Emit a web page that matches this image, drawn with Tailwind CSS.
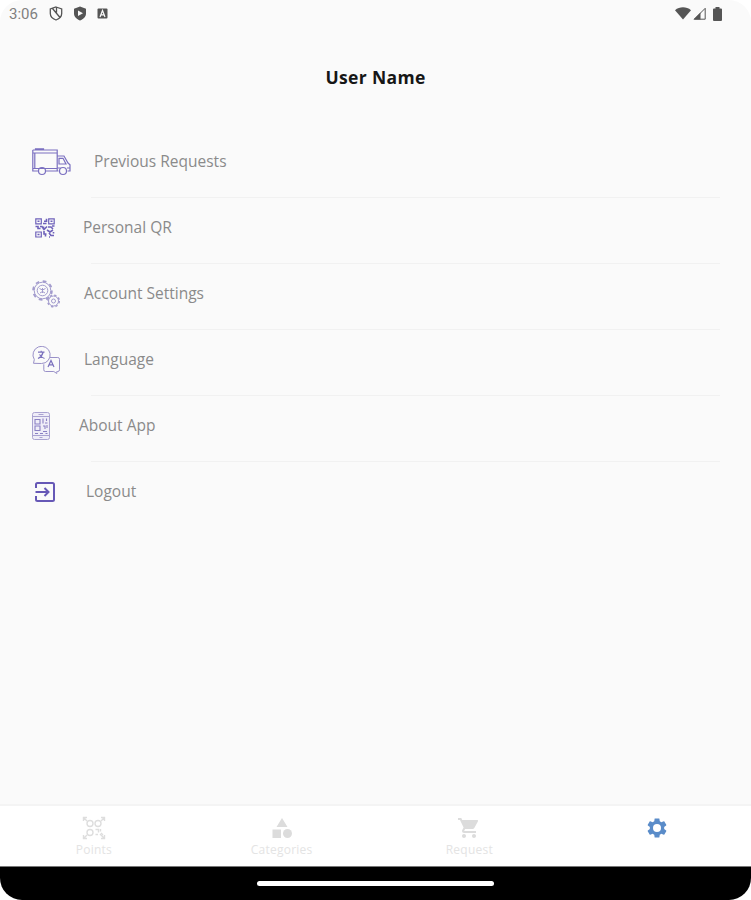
<!DOCTYPE html>
<html lang="en">
<head>
  <meta charset="UTF-8">
  <meta name="viewport" content="width=device-width, initial-scale=1.0">
  <title>User Settings</title>
  <script src="https://cdn.jsdelivr.net/npm/@tailwindcss/browser@4"></script>
</head>
<body class="bg-white font-['Open_Sans','Noto_Sans',sans-serif]">
  <div class="w-[751px] h-[900px] flex flex-col overflow-hidden rounded-[22px] bg-[#fafafa]">

    <!-- Status bar -->
    <header class="h-[27px] shrink-0 flex items-center justify-between pl-[9px] pr-[29px] text-[#555]">
      <div class="flex items-center">
        <span class="w-[40px] text-[15px] leading-7 text-[#808080] font-['Roboto',sans-serif]">3:06</span>
        <svg class="w-[14px] h-[15px] mr-[10px]" viewBox="0 0 14 15" fill="none" stroke="currentColor" stroke-width="1.3">
          <path d="M7 1 12.700 3v4.500c0 3-2.500 5.300-5.700 6.500C3.800 12.800 1.300 10.500 1.300 7.500V3zM3.500 2.500l7.500 9M7.500 1.500v5"/>
        </svg>
        <svg class="w-[14px] h-[15px] mr-[10px]" viewBox="0 0 14 15">
          <path fill="currentColor" d="M7 .5 13 2.700v4.800c0 3.200-2.600 5.700-6 7-3.400-1.300-6-3.800-6-7V2.700z"/>
          <path fill="#fafafa" d="M5 4.500v5.600l5-2.800z"/>
        </svg>
        <svg class="w-[11px] h-[11px]" viewBox="0 0 11 11">
          <rect x=".5" y=".5" width="10" height="10" rx="1" fill="currentColor"/>
          <path d="M3 9 5.500 2.500 8 9M3.800 6.800h3.400" fill="none" stroke="#fafafa" stroke-width="1.200"/>
        </svg>
      </div>
      <div class="flex items-center">
        <svg class="w-4 h-[13px] mr-[2px]" viewBox="0 0 16 13"><path fill="currentColor" d="M0 3.200C4.600-.6 11.400-.6 16 3.200L8 12.500z"/></svg>
        <svg class="w-[13px] h-[13px] mr-[7px]" viewBox="0 0 13 13">
          <path fill="none" stroke="currentColor" d="M12.200 1.300v10.900H1.300z"/>
          <path fill="currentColor" d="M7.500 5.500V12.500H.5z"/>
        </svg>
        <svg class="w-[9px] h-[14px]" viewBox="0 0 9 14"><path fill="currentColor" d="M2.500 0h4v1.500H8q1 0 1 1V13q0 1-1 1H1q-1 0-1-1V2.500q0-1 1-1h1.500z"/></svg>
      </div>
    </header>

    <h1 class="h-[105px] shrink-0 pt-[38px] text-center text-[17.5px] leading-6 tracking-[0.35px] font-bold text-[#161616]">User Name</h1>

    <!-- Menu -->
    <main class="grow">
      <ul class="pl-8 pr-[31px] text-[15.5px] text-[#8a8a8a]">
        <li class="h-[66px]">
          <a href="#" class="flex items-center h-[59px]">
            <svg class="w-[39px] h-[28px] mr-[23px]" viewBox="0 0 39 28" fill="none" stroke="#7a6fc0" stroke-width="1.200">
              <path d="M3.500 2V.8h8V2M.8 2h24.400v21H14M6.500 23H.8V2M.8 5h24.400M2.800 5v16M.8 20.500h24.400M14 23h12.500M25.200 8h6.800l4 7 2 1.800v6.200h-2.500M27 10.300h4l3 5.700h-7zM25.500 20h3M35 20h3"/>
              <circle cx="10" cy="23" r="3.500"/>
              <circle cx="31" cy="23" r="3.500"/>
            </svg>
            <span>Previous Requests</span>
          </a>
          <div class="ml-[59px] mt-[6px] h-px bg-[#f1f1f1]"></div>
        </li>
        <li class="h-[66px]">
          <a href="#" class="flex items-center h-[59px]">
            <svg class="w-5 h-5 ml-[3px] mr-7" viewBox="0 0 20 20" fill="none" stroke="#6f62ba" stroke-width="1.200">
              <path d="M.8.800h5.500v5H.8zM13.700.800h5.500v5h-5.500zM.8 14h5.500v5H.8z"/>
              <path d="M2.500 3.300h2M15.500 3.300h2M2.500 16.500h2M11.500.8v2.500H9M8 5.500h3.500M.5 8.500h2.500v2h2.500M5 8.500h2l2 3 3-3M8.500 8.500v3M13 9h3l2 2M17 8h2.500M9 13v3h2.500M10.500 18.500v-2M12 12l3 2 3-2M14 15l2 2.500h3M18.500 14v1.500M14 19h1" stroke-width="1.600"/>
            </svg>
            <span>Personal QR</span>
          </a>
          <div class="ml-[59px] mt-[6px] h-px bg-[#f1f1f1]"></div>
        </li>
        <li class="h-[66px]">
          <a href="#" class="flex items-center h-[59px]">
            <svg class="w-7 h-7 mr-6" viewBox="0 0 28 28" fill="none" stroke="#a29bcd">
              <circle cx="10.500" cy="10.500" r="8.300"/>
              <circle cx="10.500" cy="10.500" r="9.400" stroke-width="1.800" stroke-dasharray="3.700 3.680"/>
              <circle cx="10.500" cy="10.500" r="5.300"/>
              <path d="M7.500 8.500q3 3 6 0M8 13q2.500-3 5 0M10.500 8v5"/>
              <circle cx="21.500" cy="21" r="5" fill="#fafafa"/>
              <circle cx="21.500" cy="21" r="5.800" stroke-width="1.500" stroke-dasharray="2.300 2.255"/>
              <circle cx="21.500" cy="21" r="2"/>
            </svg>
            <span>Account Settings</span>
          </a>
          <div class="ml-[59px] mt-[6px] h-px bg-[#f1f1f1]"></div>
        </li>
        <li class="h-[66px]">
          <a href="#" class="flex items-center h-[59px]">
            <svg class="w-7 h-7 mr-6" viewBox="0 0 28 28" fill="none" stroke="#9990c8">
              <path d="M2.300 13.500A8.600 8.600 0 1 1 9.500 17.500L1.500 17.300z"/>
              <path d="M17.800 11.500h8q1.700 0 1.700 1.700v10.600q0 1.700-1.700 1.700h-1v2l-3-2h-8.300q-1.700 0-1.700-1.700v-5.500"/>
              <path d="M6 6.200h6.500M9.200 4.800v1.400M11 6.500Q10 10.500 6 12.500M7.500 8.500q2 3 5 4M16 21l3-6.500 3 6.500M17.200 18.800h3.600" stroke="#7b71bd" stroke-width="1.200"/>
            </svg>
            <span>Language</span>
          </a>
          <div class="ml-[59px] mt-[6px] h-px bg-[#f1f1f1]"></div>
        </li>
        <li class="h-[66px]">
          <a href="#" class="flex items-center h-[60px]">
            <svg class="w-[18px] h-7 mr-[29px]" viewBox="0 0 18 28" fill="none" stroke="#aaa3d1">
              <rect x=".5" y=".5" width="17" height="27" rx="2" fill="#efedf8"/>
              <path d="M1 4.500h16M1 23.500h16M6.500 2.500h5M7.500 25.500h3"/>
              <path d="M3 7.500h5V12H3zM3 14h5v4.500H3zM11 6.500v5M14.500 6.500v2.500M13 11h2.500M11 14h2v3M15 13v3M11 19.500h4M3 21.500h3M8 21.500h3M13.500 21.500h2" stroke="#8a80c3" stroke-width="1.100"/>
            </svg>
            <span>About App</span>
          </a>
          <div class="ml-[59px] mt-[5px] h-px bg-[#f1f1f1]"></div>
        </li>
        <li class="h-[66px]">
          <a href="#" class="flex items-center h-[59px]">
            <svg class="w-5 h-5 ml-[3px] mr-[31px]" viewBox="0 0 20 20" fill="none" stroke="#6658b6" stroke-width="2">
              <path d="M1 6V2.500Q1 1 2.500 1h15Q19 1 19 2.500v15q0 1.500-1.500 1.500h-15Q1 19 1 17.500V14M.5 10h12.500M9.500 6 13.500 10l-4 4"/>
            </svg>
            <span>Logout</span>
          </a>
        </li>
      </ul>
    </main>

    <!-- Bottom navigation -->
    <nav class="h-[62px] shrink-0 grid grid-cols-4 bg-white border-t-2 border-[#f4f4f4] text-[12px] leading-4 tracking-[0.25px] text-[#e4e4e4]">
      <a href="#" class="flex flex-col items-center pt-[10px]">
        <svg class="w-6 h-6 mb-[2px]" viewBox="0 0 24 24" fill="none" stroke="#dedede" stroke-width="1.400">
          <path d="M1.500 5V1.500H5M19 1.500h3.500V5M1.500 19v3.500H5M19 22.500h3.500V19M2 2l3 3M22 2l-3 3M2 22l3-3M22 22l-4-4"/>
          <circle cx="8" cy="7.500" r="3"/>
          <circle cx="16" cy="7.500" r="3"/>
          <circle cx="8" cy="16.500" r="3"/>
          <path d="M13.500 13.500h3v3M18.500 13v2.500M13.500 18.500h2.500M19 17l2 2"/>
        </svg>
        <span>Points</span>
      </a>
      <a href="#" class="flex flex-col items-center pt-[10px]">
        <svg class="w-6 h-6 mb-[2px]" viewBox="0 0 24 24" fill="#dcdcdc">
          <path d="M12 2 6.500 11h11zM2.500 13.500h8.500v8.500H2.500z"/><circle cx="17.500" cy="17.500" r="4.500"/>
        </svg>
        <span>Categories</span>
      </a>
      <a href="#" class="flex flex-col items-center pt-[10px]">
        <svg class="w-6 h-6 mb-[2px]" viewBox="0 0 24 24" fill="#dcdcdc">
          <path d="M7 18c-1.100 0-1.990.9-1.990 2S5.900 22 7 22s2-.9 2-2-.9-2-2-2zM1 2v2h2l3.600 7.590-1.350 2.450c-.16.280-.25.610-.25.960 0 1.100.9 2 2 2h12v-2H7.420c-.14 0-.25-.11-.25-.25l.03-.12.9-1.630h7.450c.75 0 1.410-.41 1.750-1.030l3.580-6.490A1 1 0 0 0 20 4H5.210l-.94-2H1zm16 16c-1.100 0-1.990.9-1.990 2s.89 2 1.990 2 2-.9 2-2-.9-2-2-2z"/>
        </svg>
        <span>Request</span>
      </a>
      <a href="#" class="flex flex-col items-center pt-[10px]">
        <svg class="w-6 h-6" viewBox="0 0 24 24" fill="#5a8cc9">
          <path d="M19.140 12.940c.04-.3.060-.61.060-.94 0-.32-.02-.64-.07-.94l2.030-1.580c.18-.14.230-.41.120-.61l-1.920-3.320c-.12-.22-.37-.29-.59-.22l-2.390.96c-.5-.38-1.030-.7-1.620-.94l-.36-2.540c-.04-.24-.24-.41-.48-.41h-3.840c-.24 0-.43.170-.47.410l-.36 2.540c-.59.240-1.130.570-1.620.940l-2.390-.96c-.22-.08-.47 0-.59.220L2.740 8.870c-.12.210-.08.470.12.610l2.030 1.580c-.05.300-.09.630-.09.940s.02.640.07.940l-2.030 1.580c-.18.140-.23.410-.12.610l1.920 3.320c.12.220.37.290.59.220l2.390-.96c.5.380 1.030.7 1.620.94l.36 2.540c.05.240.24.410.48.410h3.840c.24 0 .44-.17.47-.41l.36-2.540c.59-.24 1.130-.56 1.620-.94l2.390.96c.22.080.47 0 .59-.22l1.920-3.320c.12-.22.070-.47-.12-.61l-2.010-1.580zM12 16a4 4 0 1 1 0-8 4 4 0 0 1 0 8z"/>
        </svg>
      </a>
    </nav>

    <!-- Gesture bar -->
    <footer class="h-[34px] shrink-0 flex justify-center pt-[14px] bg-black border-t border-[#777]">
      <div class="w-[237px] h-[5px] rounded-full bg-white"></div>
    </footer>
  </div>
</body>
</html>
